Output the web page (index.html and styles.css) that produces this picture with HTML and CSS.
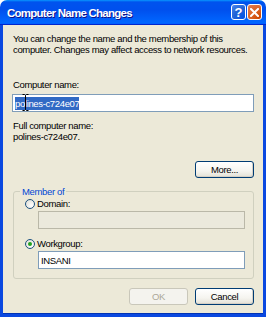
FILE: index.html
```html
<!DOCTYPE html>
<html>
<head>
<meta charset="utf-8">
<link rel="stylesheet" href="styles.css">
</head>
<body>
<div class="window">
  <div class="titlebar">
    <span class="title">Computer Name Changes</span>
    <div class="tb-buttons">
      <div class="tb-btn help">?</div>
      <div class="tb-btn close">
        <svg width="9" height="9" viewBox="0 0 9 9"><path d="M1 1L8 8M8 1L1 8" stroke="#fff" stroke-width="2" stroke-linecap="square"/></svg>
      </div>
    </div>
  </div>
  <div class="content">
    <p class="desc">You can change the name and the membership of this<br>computer. Changes may affect access to network resources.</p>
    <div class="label name-label">Computer name:</div>
    <div class="input name-input">
      <span class="sel">polines-c724e07</span>
      <svg class="ibeam" width="7" height="17" viewBox="0 0 7 17"><path d="M0.5 0.5H2.5L3.5 1.5L4.5 0.5H6.5M3.5 1.5V15.5M0.5 16.5H2.5L3.5 15.5L4.5 16.5H6.5" stroke="#000" stroke-width="1" fill="none"/></svg>
    </div>
    <div class="label full-label">Full computer name:</div>
    <div class="label">polines-c724e07.</div>
    <div class="btn-row more-row"><div class="btn">More...</div></div>
    <fieldset class="group">
      <legend>Member of</legend>
      <div class="radio-row domain-row"><span class="radio"></span><span>Domain:</span></div>
      <div class="input disabled domain-input"></div>
      <div class="radio-row wg-row"><span class="radio checked"></span><span>Workgroup:</span></div>
      <div class="input wg-input">INSANI</div>
    </fieldset>
    <div class="btn-row footer"><div class="btn disabled">OK</div><div class="btn">Cancel</div></div>
  </div>
</div>
</body>
</html>
```
FILE: styles.css
```css
html, body {
  margin: 0;
  padding: 0;
  background: #fff;
}
body {
  font-family: "Liberation Sans", Arial, sans-serif;
  font-size: 9.5px;
  letter-spacing: -0.35px;
  color: #000;
}
.window {
  width: 266px;
  height: 317px;
  display: flex;
  flex-direction: column;
}
.titlebar {
  height: 25px;
  flex: none;
  border-radius: 7px 7px 0 0;
  background: linear-gradient(180deg, #0997ff, #0053ee 8%, #0050ee 40%, #0066ff 88%, #0066ff 93%, #005bff 95%, #0026cd 96%, #0026cd);
  display: flex;
  align-items: center;
  padding: 0 4px 0 7px;
  box-sizing: border-box;
}
.title {
  flex: 1;
  color: #fff;
  font-weight: bold;
  font-size: 11.5px;
  letter-spacing: -0.75px;
  text-shadow: 1px 1px 0 #0f1089;
}
.tb-buttons {
  display: flex;
  gap: 1px;
  align-self: flex-start;
  margin-top: 4px;
}
.tb-btn {
  width: 15px;
  height: 16px;
  box-sizing: border-box;
  border: 1px solid #fff;
  border-radius: 3px;
  display: flex;
  align-items: center;
  justify-content: center;
  color: #fff;
  font-weight: bold;
  font-size: 13px;
  letter-spacing: 0;
}
.help {
  background: radial-gradient(circle at 90% 90%, #0054e9 0%, #2263d5 55%, #4d88ee 100%);
}
.close {
  background: radial-gradient(circle at 90% 90%, #cc4600 0%, #dc6527 55%, #e27f57 100%);
}
.content {
  flex: 1;
  background: #ece9d8;
  border: 3px solid #0a48e0;
  border-top: none;
  box-shadow: inset 0 -1px 0 #0032b4;
  padding: 8px 9px 0 9px;
  display: flex;
  flex-direction: column;
}
.desc {
  margin: 0;
  padding-left: 1px;
  line-height: 11px;
  white-space: nowrap;
}
.label {
  padding-left: 1px;
  line-height: 11px;
}
.name-label {
  margin-top: 24px;
}
.input {
  height: 18px;
  box-sizing: border-box;
  border: 1px solid #7f9db9;
  background: #fff;
  display: flex;
  align-items: center;
  padding-left: 2px;
  line-height: 11px;
}
.name-input {
  margin-top: 4px;
  position: relative;
}
.sel {
  background: #316ac5;
  color: #fff;
  padding: 1px 0;
}
.ibeam {
  position: absolute;
  left: 9px;
  top: -1px;
}
.full-label {
  margin-top: 8px;
}
.btn-row {
  display: flex;
  justify-content: flex-end;
  gap: 7px;
}
.more-row {
  margin-top: 19px;
}
.btn {
  width: 59px;
  height: 17px;
  box-sizing: border-box;
  border: 1px solid #003c74;
  border-radius: 3px;
  background: linear-gradient(180deg, #fff 0%, #f5f4ef 60%, #e3e1d6 100%);
  box-shadow: inset -1px -1px 0 #d6d0c5;
  display: flex;
  align-items: center;
  justify-content: center;
}
.btn.disabled {
  border-color: #c9c7ba;
  background: #f4f3ee;
  box-shadow: none;
  color: #aca899;
}
.group {
  margin: 8px 0 0 1px;
  padding: 0 0 9px 0;
  border: 1px solid #d0d0bf;
  border-radius: 3px;
  min-width: 0;
}
.group legend {
  margin-left: 6px;
  padding: 0 2px;
  color: #0046d5;
  line-height: 11px;
}
.radio-row {
  display: flex;
  align-items: center;
  gap: 2px;
  line-height: 11px;
  padding-left: 11px;
}
.domain-row {
  margin-top: 1px;
}
.wg-row {
  margin-top: 9px;
}
.radio {
  width: 10px;
  height: 10px;
  box-sizing: border-box;
  border: 1px solid #1c5180;
  border-radius: 50%;
  background: radial-gradient(circle at 70% 70%, #fff 0%, #e6e6e0 70%, #d0d0c8 100%);
  display: flex;
  align-items: center;
  justify-content: center;
}
.radio.checked::after {
  content: "";
  width: 4px;
  height: 4px;
  border-radius: 50%;
  background: #21a121;
}
.domain-input {
  margin: 2px 0 0 24px;
  width: 207px;
}
.input.disabled {
  background: #ebe9dc;
  border-color: #bab8a8;
}
.wg-input {
  margin: 2px 0 0 24px;
  width: 207px;
}
.footer {
  margin-top: 9px;
}
```
